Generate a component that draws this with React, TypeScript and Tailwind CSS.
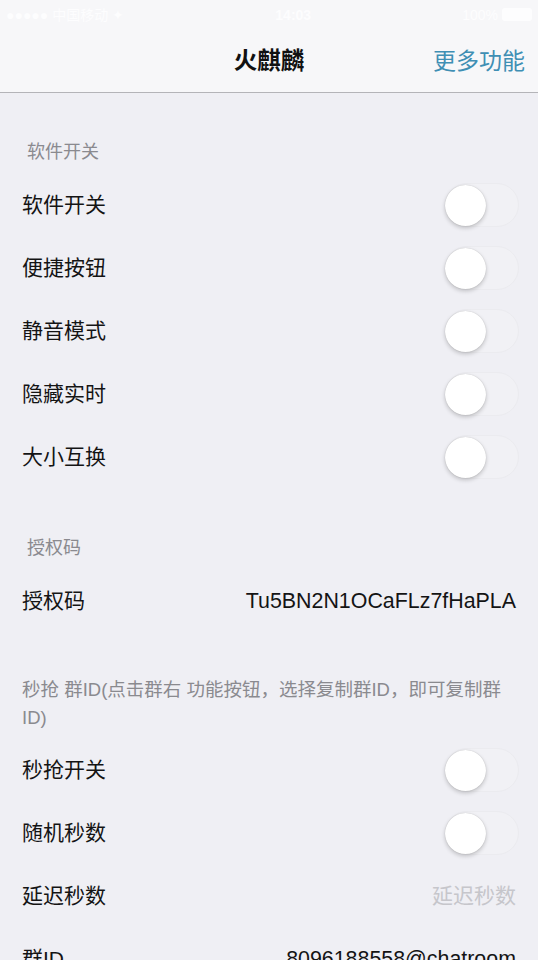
import React from "react";

function Toggle() {
  return (
    <div className="relative w-[74px] h-[44px] rounded-full bg-[#f1f1f5] border border-[#ebebef]">
      <div className="absolute left-[-1px] top-[1px] w-[41px] h-[41px] rounded-full bg-white shadow-[0_2px_4px_rgba(0,0,0,0.2),0_0_1px_rgba(0,0,0,0.22)]" />
    </div>
  );
}

function SwitchRow({ label }: { label: string }) {
  return (
    <div className="h-[63px] flex items-center justify-between pl-[22px] pr-[19px]">
      <span className="text-[21px] leading-[28px] text-[#141414]">{label}</span>
      <Toggle />
    </div>
  );
}

function ValueRow({ label, value, placeholder }: { label: string; value: string; placeholder?: boolean }) {
  return (
    <div className="h-[63px] flex items-center justify-between pl-[22px] pr-[22px]">
      <span className="text-[21px] leading-[28px] text-[#141414]">{label}</span>
      <span className={placeholder ? "text-[21px] leading-[28px] text-[#c6c6cb]" : "text-[21.4px] leading-[28px] text-[#141414]"}>
        {value}
      </span>
    </div>
  );
}

export default function App() {
  return (
    <div className="w-[538px] h-[960px] overflow-hidden bg-[#efeff4] font-['Liberation_Sans','Noto_Sans_CJK_SC',sans-serif]">
      <header className="h-[93px] bg-[#f7f7f9] border-b border-[#b4b4b8] flex flex-col">
        <div className="h-[29px] flex items-center justify-between px-[6px] text-[#fdfdfe] text-[14px] leading-[18px]">
          <span className="flex items-center gap-[4px]">
            <span>●●●●●</span>
            <span>中国移动</span>
            <span>✦</span>
          </span>
          <span className="font-bold">14:03</span>
          <span className="flex items-center gap-[4px]">
            <span>100%</span>
            <span className="w-[30px] h-[13px] rounded-[3px] bg-[#fdfdfe]" />
          </span>
        </div>
        <div className="relative flex-1 flex items-center justify-center">
          <span className="text-[23.5px] leading-[30px] font-bold text-[#111]">火麒麟</span>
          <span className="absolute right-[13px] top-1/2 -translate-y-1/2 text-[23px] leading-[30px] text-[#3f8fb4]">更多功能</span>
        </div>
      </header>

      <div className="h-[80px] flex items-end pb-[9px] px-[27px]">
        <span className="text-[18px] leading-[24px] text-[#8a8a8f]">软件开关</span>
      </div>
      <SwitchRow label="软件开关" />
      <SwitchRow label="便捷按钮" />
      <SwitchRow label="静音模式" />
      <SwitchRow label="隐藏实时" />
      <SwitchRow label="大小互换" />

      <div className="h-[81px] flex items-end pb-[9px] px-[27px]">
        <span className="text-[18px] leading-[24px] text-[#8a8a8f]">授权码</span>
      </div>
      <ValueRow label="授权码" value="Tu5BN2N1OCaFLz7fHaPLA" />

      <div className="pt-[44px] pb-[6px] pl-[22px] pr-[26px]">
        <p className="text-[18.5px] leading-[28px] text-[#8a8a8f]">
          秒抢 群ID(点击群右 功能按钮，选择复制群ID，即可复制群ID)
        </p>
      </div>
      <SwitchRow label="秒抢开关" />
      <SwitchRow label="随机秒数" />
      <ValueRow label="延迟秒数" value="延迟秒数" placeholder />
      <ValueRow label="群ID" value="8096188558@chatroom" />
    </div>
  );
}
